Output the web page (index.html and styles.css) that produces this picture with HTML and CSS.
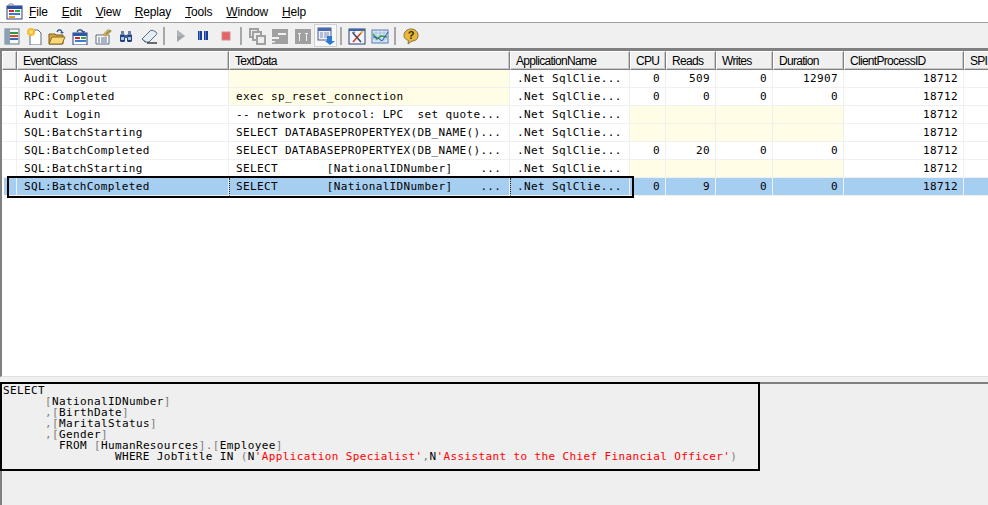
FILE: index.html
```html
<!DOCTYPE html>
<html lang="en">
<head>
<meta charset="utf-8">
<title>SQL Server Profiler</title>
<link rel="stylesheet" href="styles.css">
</head>
<body>
<div class="app">
  <div class="menubar">
    <svg class="appicon" width="17" height="17" viewBox="0 0 17 17"><rect x="1" y="3" width="15" height="13" fill="#fff" stroke="#2a3f7a"/><rect x="1" y="3" width="15" height="3" fill="#2a4fa8"/><rect x="3" y="7" width="5" height="2" fill="#d22"/><rect x="9" y="7" width="5" height="2" fill="#3a3"/><rect x="3" y="10" width="11" height="2" fill="#3a7ad8"/><rect x="3" y="13" width="6" height="2" fill="#e0a020"/><path d="M3 3V1h4v2" fill="none" stroke="#8a8a8a"/></svg>
    <span class="menu"><u>F</u>ile</span>
    <span class="menu"><u>E</u>dit</span>
    <span class="menu"><u>V</u>iew</span>
    <span class="menu"><u>R</u>eplay</span>
    <span class="menu"><u>T</u>ools</span>
    <span class="menu"><u>W</u>indow</span>
    <span class="menu"><u>H</u>elp</span>
  </div>
  <div class="toolbar">
    <span class="btn"><svg width="18" height="18" viewBox="0 0 18 18"><rect x="3" y="2" width="14" height="15" fill="#f4f6f8" stroke="#6a7a8a"/><rect x="3" y="2" width="5" height="15" fill="#8aa0b4"/><rect x="8" y="5" width="8" height="2" fill="#2f9a3a"/><rect x="8" y="8" width="8" height="2" fill="#d04040"/><rect x="8" y="11" width="8" height="2" fill="#3a6ab0"/></svg></span>
    <span class="btn"><svg width="18" height="18" viewBox="0 0 18 18"><path d="M5 3h8l3 3v12H5z" fill="#fff" stroke="#5a6a80"/><circle cx="6" cy="5" r="4" fill="#f8b830"/><circle cx="6" cy="5" r="2" fill="#fde070"/></svg></span>
    <span class="btn"><svg width="18" height="18" viewBox="0 0 18 18"><path d="M1 7h6l1 1h7v9H1z" fill="#d8a840" stroke="#7a5a18"/><path d="M1 17l3-7h13l-3 7z" fill="#f8d878" stroke="#8a6a20"/><path d="M9 5c1-3 4-3 5 0" fill="none" stroke="#3a5a8a" stroke-width="1.4"/><path d="M12 5h4l-2 2z" fill="#3a5a8a"/></svg></span>
    <span class="btn"><svg width="18" height="18" viewBox="0 0 18 18"><rect x="2" y="6" width="14" height="12" fill="#fff" stroke="#2a3f7a"/><rect x="2" y="6" width="14" height="3" fill="#2a5aa8"/><rect x="4" y="10" width="5" height="2" fill="#d22"/><rect x="10" y="10" width="5" height="2" fill="#3a3"/><rect x="4" y="13" width="11" height="2" fill="#3a7ad8"/><path d="M6 5c1-3 5-3 6 0" fill="none" stroke="#3a5a8a" stroke-width="1.4"/><path d="M10 4h4l-1 3z" fill="#3a5a8a"/></svg></span>
    <span class="btn"><svg width="18" height="18" viewBox="0 0 18 18"><path d="M2 8h13v9H2z" fill="#fdfdfd" stroke="#5a6a80"/><path d="M4 11h2M7 11h6M4 13h2M7 13h6M4 15h2M7 15h6" stroke="#5a6a90"/><path d="M8 8l6-6 4 2-6 6z" fill="#c8a860"/><path d="M12 7l5-4" stroke="#5a8a50"/></svg></span>
    <span class="btn"><svg width="18" height="18" viewBox="0 0 18 18"><rect x="3" y="7" width="5" height="8" rx="1.5" fill="#24407a"/><rect x="10" y="7" width="5" height="8" rx="1.5" fill="#24407a"/><rect x="4" y="4" width="3" height="4" fill="#6a82a8"/><rect x="11" y="4" width="3" height="4" fill="#6a82a8"/><rect x="7" y="8" width="4" height="3" fill="#3a5a98"/><rect x="4" y="10" width="3" height="3" fill="#a8c4e8"/><rect x="11" y="10" width="3" height="3" fill="#a8c4e8"/></svg></span>
    <span class="btn"><svg width="18" height="18" viewBox="0 0 18 18"><path d="M2 12l8-8c1-1 3-1 4 0l2 1c1 1 1 2 0 3l-7 7H5z" fill="#e4ecf6" stroke="#5a6a80"/><path d="M2 12l4 3" stroke="#5a6a80"/><path d="M7 16h10" stroke="#111" stroke-width="1.2"/></svg></span>
    <span class="sep"></span>
    <span class="btn"><svg width="18" height="18" viewBox="0 0 18 18"><path d="M6 3l8 6-8 6z" fill="#a0a4a8"/><path d="M6 3l8 6H6z" fill="#b0b4b8"/></svg></span>
    <span class="btn"><svg width="18" height="18" viewBox="0 0 18 18"><rect x="4" y="4" width="4" height="9" fill="#1a3f98"/><rect x="10" y="4" width="4" height="9" fill="#1a3f98"/><rect x="5" y="4" width="1" height="9" fill="#5a80d0"/><rect x="11" y="4" width="1" height="9" fill="#5a80d0"/></svg></span>
    <span class="btn"><svg width="18" height="18" viewBox="0 0 18 18"><rect x="5" y="5" width="8" height="8" fill="#e06468" stroke="#d88a8a"/></svg></span>
    <span class="sep"></span>
    <span class="btn"><svg width="18" height="18" viewBox="0 0 18 18"><rect x="2" y="2" width="8" height="8" fill="#eee" stroke="#a0a0a0" stroke-width="2"/><rect x="5" y="5" width="8" height="8" fill="#eee" stroke="#a0a0a0" stroke-width="2"/><rect x="9" y="9" width="8" height="8" fill="#eee" stroke="#a0a0a0" stroke-width="2"/></svg></span>
    <span class="btn"><svg width="18" height="18" viewBox="0 0 18 18"><rect x="1" y="2" width="16" height="15" fill="#a0a0a0"/><path d="M7 6h8v2H7zM1 10h7v2H1zM1 14h3v1.500H1z" fill="#f0f0f0"/></svg></span>
    <span class="btn"><svg width="18" height="18" viewBox="0 0 18 18"><rect x="1" y="2" width="16" height="15" fill="#a0a0a0"/><path d="M4 6h3v1H6v7H5V7H4zM11 6h3v1h-1v7h-1V7h-1z" fill="#f0f0f0"/></svg></span>
    <span class="btn btn-on"><svg width="18" height="18" viewBox="0 0 18 18"><rect x="1" y="1" width="13" height="12" fill="#eef2f8" stroke="#4a5a90"/><rect x="1" y="1" width="13" height="3" fill="#4a6ab0"/><path d="M3 6h3M7 6h5M3 8h3M7 8h5M3 10h3M7 10h5" stroke="#7a8ab0"/><path d="M10 9h5v5h3l-5 4-5-4h2z" fill="#2a78d8"/></svg></span>
    <span class="sep"></span>
    <span class="btn"><svg width="18" height="18" viewBox="0 0 18 18"><rect x="1" y="2" width="16" height="15" fill="#f2f6fc" stroke="#2a3f70"/><rect x="1" y="2" width="16" height="2" fill="#3a66b0"/><path d="M5 15L13 6" stroke="#d84020" stroke-width="1.600"/><path d="M13 6l2-2" stroke="#e8b030" stroke-width="2"/><path d="M5 6l8 9" stroke="#404858" stroke-width="1.600"/><path d="M4 6l3-1" stroke="#7a8090" stroke-width="1.500"/></svg></span>
    <span class="btn"><svg width="18" height="18" viewBox="0 0 18 18"><rect x="1" y="3" width="16" height="13" fill="#dce8f8" stroke="#5a7ab0"/><path d="M1 6h16M1 9h16M1 12h16M5 3v13M9 3v13M13 3v13" stroke="#9ab4d8" stroke-width=".7"/><path d="M2 7l4 5 4-3 6 1" fill="none" stroke="#2a9a3a" stroke-width="1.300"/><path d="M2 10l5 1 4 3 6-9" fill="none" stroke="#2a5ab0"/></svg></span>
    <span class="sep"></span>
    <span class="btn"><svg width="18" height="18" viewBox="0 0 18 18"><path d="M9 2c4 0 7 2.500 7 6.500S13 14 10 14l-4 3 .5-3.500C3 12.500 2 10.500 2 8.500 2 5 5 2 9 2z" fill="#e8b838" stroke="#8a7040"/><text class="helpq" x="9" y="12" text-anchor="middle">?</text></svg></span>
  </div>
  <div class="grid">
    <div class="row head">
      <div class="hc"></div><div class="hc">EventClass</div><div class="hc">TextData</div><div class="hc">ApplicationName</div><div class="hc">CPU</div><div class="hc">Reads</div><div class="hc">Writes</div><div class="hc">Duration</div><div class="hc">ClientProcessID</div><div class="hc">SPID</div>
    </div>
    <div class="row">
      <div class="c"></div><div class="c">Audit Logout</div><div class="c y"></div><div class="c">.Net SqlClie...</div><div class="c r">0</div><div class="c r">509</div><div class="c r">0</div><div class="c r">12907</div><div class="c r">18712</div><div class="c"><span class="spid">53</span></div>
    </div>
    <div class="row">
      <div class="c"></div><div class="c">RPC:Completed</div><div class="c y">exec sp_reset_connection</div><div class="c">.Net SqlClie...</div><div class="c r">0</div><div class="c r">0</div><div class="c r">0</div><div class="c r">0</div><div class="c r">18712</div><div class="c"><span class="spid">53</span></div>
    </div>
    <div class="row">
      <div class="c"></div><div class="c">Audit Login</div><div class="c">-- network protocol: LPC  set quote...</div><div class="c">.Net SqlClie...</div><div class="c y"></div><div class="c y"></div><div class="c y"></div><div class="c y"></div><div class="c r">18712</div><div class="c"><span class="spid">53</span></div>
    </div>
    <div class="row">
      <div class="c"></div><div class="c">SQL:BatchStarting</div><div class="c">SELECT DATABASEPROPERTYEX(DB_NAME()...</div><div class="c">.Net SqlClie...</div><div class="c y"></div><div class="c y"></div><div class="c y"></div><div class="c y"></div><div class="c r">18712</div><div class="c"><span class="spid">53</span></div>
    </div>
    <div class="row">
      <div class="c"></div><div class="c">SQL:BatchCompleted</div><div class="c">SELECT DATABASEPROPERTYEX(DB_NAME()...</div><div class="c">.Net SqlClie...</div><div class="c r">0</div><div class="c r">20</div><div class="c r">0</div><div class="c r">0</div><div class="c r">18712</div><div class="c"><span class="spid">53</span></div>
    </div>
    <div class="row">
      <div class="c"></div><div class="c">SQL:BatchStarting</div><div class="c">SELECT       [NationalIDNumber]    ...</div><div class="c">.Net SqlClie...</div><div class="c y"></div><div class="c y"></div><div class="c y"></div><div class="c y"></div><div class="c r">18712</div><div class="c"><span class="spid">53</span></div>
    </div>
    <div class="row sel">
      <div class="c"></div><div class="c">SQL:BatchCompleted</div><div class="c focus">SELECT       [NationalIDNumber]    ...</div><div class="c focus">.Net SqlClie...</div><div class="c r">0</div><div class="c r">9</div><div class="c r">0</div><div class="c r">0</div><div class="c r">18712</div><div class="c"><span class="spid">53</span></div>
    </div>
    <div class="mark mark-row"></div>
  </div>
  <div class="splitter"></div>
  <div class="detail">
<pre class="sql">SELECT
      <span class="g">[</span>NationalIDNumber<span class="g">]</span>
      <span class="g">,[</span>BirthDate<span class="g">]</span>
      <span class="g">,[</span>MaritalStatus<span class="g">]</span>
      <span class="g">,[</span>Gender<span class="g">]</span>
	FROM <span class="g">[</span>HumanResources<span class="g">].[</span>Employee<span class="g">]</span>
		WHERE JobTitle IN <span class="g">(</span>N<span class="s">'Application Specialist'</span><span class="g">,</span>N<span class="s">'Assistant to the Chief Financial Officer'</span><span class="g">)</span></pre>
    <div class="mark mark-sql"></div>
  </div>
</div>
</body>
</html>
```
FILE: styles.css
```css
html, body { margin: 0; padding: 0; height: 100%; overflow: hidden; background: #f0f0f0; }
.app { display: flex; flex-direction: column; width: 988px; height: 505px; font-family: "Liberation Sans", Arial, sans-serif; color: #000; }
.menubar { display: flex; align-items: center; height: 22px; flex: none; background: #fff; border-bottom: 1px solid #a0a0a0; padding-left: 6px; font-size: 12px; letter-spacing: -.17px; }
.appicon { margin-right: 6px; }
.menu { margin-right: 14px; padding-top: 1px; white-space: nowrap; }
.toolbar { display: flex; align-items: center; height: 25px; flex: none; margin-left: -1px; background: #f0f0f0; }
.btn { display: flex; align-items: center; justify-content: center; width: 23px; height: 23px; flex: none; box-sizing: border-box; }
.btn-on { border: 1px solid #d0d0d0; background: #f8f8f8; }
.sep { width: 2px; height: 18px; margin: 0 3px; background: #a8a8a8; flex: none; }
.helpq { font: bold 11px "Liberation Sans", sans-serif; fill: #3a2a10; }
.grid { position: relative; flex: none; height: 329px; overflow: hidden; background: #fff; border-top: 3px solid #808080; border-left: 2px solid #808080; border-bottom: 1px solid #e0e0e0; box-sizing: border-box; }
.row { display: grid; grid-template-columns: 15px 212px 281px 120px 36px 50px 57px 71px 120px 100px; height: 18px; width: 986px; }
.head { height: 19px; }
.hc { box-sizing: border-box; height: 19px; background: #f0f0f0; border: 1px solid; border-color: #fff #808080 #808080 #fff; box-shadow: inset -1px -1px 0 #c8c8c8; padding: 1px 0 0 5px; font-size: 12px; line-height: 16px; letter-spacing: -.7px; overflow: hidden; white-space: nowrap; }
.c { box-sizing: border-box; height: 18px; border-right: 1px solid #f0f0f0; border-bottom: 1px solid #f0f0f0; padding: 0 0 0 7px; font: 11px/17px "DejaVu Sans Mono", monospace; letter-spacing: .36px; white-space: pre; overflow: hidden; }
.r { text-align: right; padding: 0 5px 0 0; }
.y { background: #fffde6; }
.sel .c { background: #a6cef0; }
.sel .c:first-child { margin-left: 2px; }
.focus { border-left: 1px dotted #222; padding-left: 6px; }
.spid { display: block; margin-left: 21px; color: #e8d870; }
.mark { position: absolute; box-sizing: border-box; border: 2px solid #000; pointer-events: none; }
.mark-row { left: 5px; top: 125px; width: 627px; height: 22px; }
.splitter { height: 5px; flex: none; background: #f0f0f0; }
.detail { position: relative; flex: 1; background: #efefef; border-left: 2px solid #808080; border-top: 2px solid #808080; }
.sql { margin: 0; padding: 1px 0 0 1px; font: 11px/11px "DejaVu Sans Mono", monospace; letter-spacing: .37px; tab-size: 8; color: #000; }
.g { color: #808080; }
.s { color: #f00; }
.mark-sql { left: -2px; top: -2px; width: 760px; height: 89px; }
```
